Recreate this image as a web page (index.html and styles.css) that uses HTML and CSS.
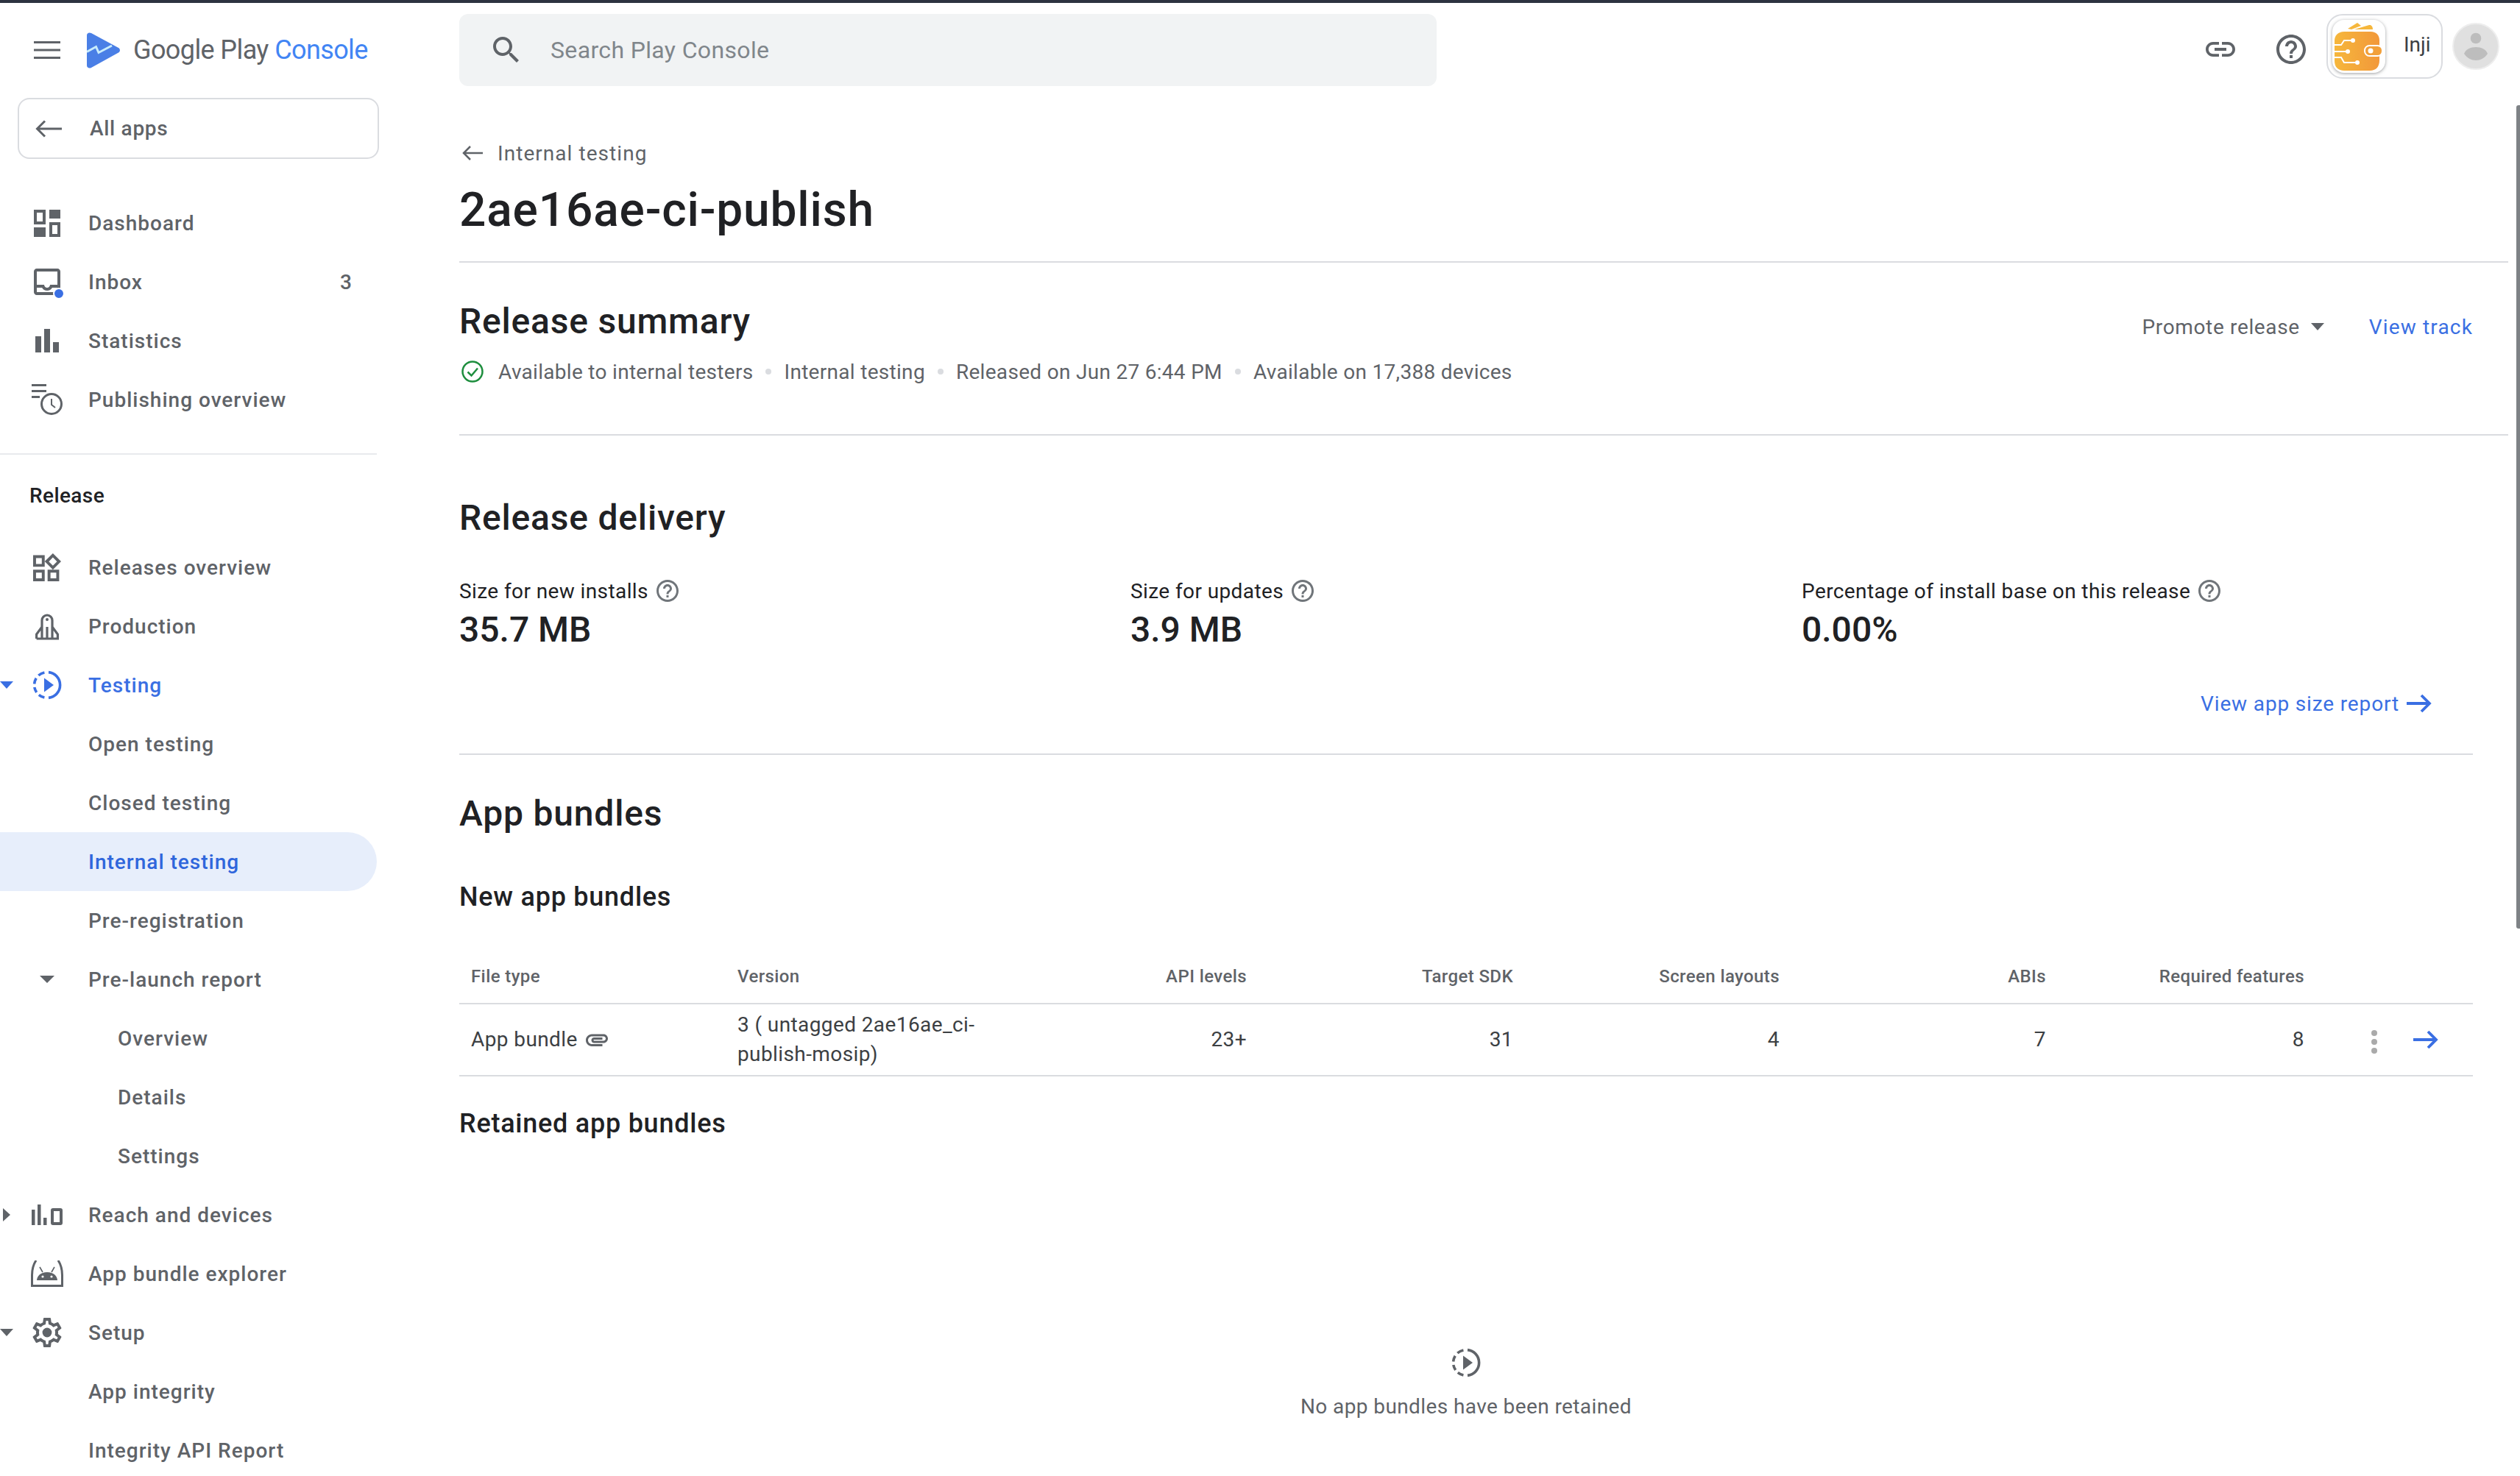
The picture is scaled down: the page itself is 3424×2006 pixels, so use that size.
FILE: index.html
```html
<!DOCTYPE html>
<html lang="en">
  <head>
    <meta charset="UTF-8" />
    <title>2ae16ae-ci-publish</title>
    <link rel="stylesheet" href="styles.css">
  </head>
  <body>
    <svg class="sprite">
      <symbol id="i-testing" viewBox="0 0 40 40">
        <g fill="none" stroke="currentColor" stroke-width="3.6">
          <path d="M22 2.6A17.5 17.5 0 0 1 22 37.4" />
          <path d="M16.4 2.9A17.5 17.5 0 0 0 8.3 7" />
          <path d="M5.2 10.7A17.5 17.5 0 0 0 2.6 18.5" />
          <path d="M2.8 23A17.5 17.5 0 0 0 5.7 30" />
          <path d="M8.8 33.4A17.5 17.5 0 0 0 16.4 37.1" />
        </g>
        <path fill="currentColor" d="M16 10.500L29 20 16 29.500z" />
      </symbol>
      <symbol id="i-help" viewBox="0 0 24 24">
        <path fill="currentColor" d="M11 18h2v-2h-2v2zm1-16C6.48 2 2 6.48 2 12s4.48 10 10 10 10-4.48 10-10S17.52 2 12 2zm0 18c-4.41 0-8-3.59-8-8s3.59-8 8-8 8 3.59 8 8-3.59 8-8 8zm0-14c-2.21 0-4 1.790-4 4h2c0-1.100.9-2 2-2s2 .9 2 2c0 2-3 1.750-3 5h2c0-2.250 3-2.500 3-5 0-2.210-1.790-4-4-4z" />
      </symbol>
      <symbol id="i-arrow-right" viewBox="0 0 36 36">
        <path fill="none" stroke="currentColor" stroke-width="3.8" d="M2 18H32M22 7l11 11-11 11" />
      </symbol>
    </svg>

    <div class="app">
      <aside class="sidebar">
        <div class="brand">
          <svg class="menu-icon" viewBox="0 0 36 24"><path fill="currentColor" d="M0 0h36v3H0zM0 10.500h36v3H0zM0 21h36v3H0z" /></svg>
          <svg class="brand-logo" viewBox="0 0 45 49">
            <path fill="#4a7fe6" d="M0 4C0 1 3-.5 6 1L43 21c2.600 1.400 2.600 5 0 6.500L6 48c-3 1.500-6 0-6-3z" />
            <path fill="none" stroke="#c8ecfb" stroke-width="3" d="M0 26.500L12.500 19.500 16 27.500 34 18" />
          </svg>
          <span class="brand-name">Google Play <span class="brand-accent">Console</span></span>
        </div>

        <a class="all-apps">
          <svg viewBox="0 0 36 24"><path fill="none" stroke="currentColor" stroke-width="3" d="M36 12H3M13 1.500L2.500 12 13 22.500" /></svg>
          <span>All apps</span>
        </a>

        <nav class="nav nav-top">
          <a class="nav-row">
            <span class="caret-slot"></span>
            <span class="icon-slot">
              <svg width="36" height="37" viewBox="0 0 36 37"><path fill="currentColor" fill-rule="evenodd" d="M0 0h16v20H0zM4 4v12h8V4zM21 0h15v12H21zM0 24h16v13H0zM21 17h15v20H21zM25 21v12h7V21z" /></svg>
            </span>
            <span class="nav-text">Dashboard</span>
          </a>
          <a class="nav-row">
            <span class="caret-slot"></span>
            <span class="icon-slot">
              <svg width="36" height="36" viewBox="3 3 18 18"><path fill="currentColor" d="M19 3H5c-1.100 0-2 .9-2 2v14c0 1.100.9 2 2 2h14c1.100 0 2-.9 2-2V5c0-1.100-.9-2-2-2zm0 16H5v-3h3.560c.69 1.190 1.970 2 3.450 2s2.750-.81 3.450-2H19v3zm0-5h-4.990c0 1.100-.9 2-2 2s-2-.9-2-2H5V5h14v9z" /></svg>
              <span class="unread-dot"></span>
            </span>
            <span class="nav-text">Inbox</span>
            <span class="nav-count">3</span>
          </a>
          <a class="nav-row">
            <span class="caret-slot"></span>
            <span class="icon-slot">
              <svg width="32" height="32" viewBox="0 0 32 32"><path fill="currentColor" d="M0 10h8v22H0zM12 0h8v32h-8zM24 18h8v14h-8z" /></svg>
            </span>
            <span class="nav-text">Statistics</span>
          </a>
          <a class="nav-row">
            <span class="caret-slot"></span>
            <span class="icon-slot">
              <svg width="42" height="42" viewBox="0 0 42 42">
                <path fill="currentColor" d="M0 0h20v3H0zM0 8h20v3H0zM0 16h11v3H0z" />
                <circle cx="27" cy="27" r="13.500" fill="none" stroke="currentColor" stroke-width="3" />
                <path fill="none" stroke="currentColor" stroke-width="2" d="M27 20v8l5 4" />
              </svg>
            </span>
            <span class="nav-text">Publishing overview</span>
          </a>
        </nav>

        <div class="nav-divider"></div>
        <div class="nav-label">Release</div>

        <nav class="nav">
          <a class="nav-row">
            <span class="caret-slot"></span>
            <span class="icon-slot">
              <svg width="38" height="38" viewBox="3 1.690 19.320 19.320"><path fill="currentColor" d="M16.660 4.520l2.830 2.830-2.830 2.830-2.830-2.830 2.830-2.830M9 5v4H5V5h4m10 10v4h-4v-4h4M9 15v4H5v-4h4m7.660-13.310L11 7.340 16.660 13l5.660-5.660-5.660-5.650zM11 3H3v8h8V3zm10 10h-8v8h8v-8zm-10 0H3v8h8v-8z" /></svg>
            </span>
            <span class="nav-text">Releases overview</span>
          </a>
          <a class="nav-row">
            <span class="caret-slot"></span>
            <span class="icon-slot">
              <svg width="36" height="38" viewBox="0 0 36 38">
                <path fill="none" stroke="currentColor" stroke-width="3.200" d="M11 36V11a7 7 0 0 1 14 0v25M3.600 36H32.400V30L25 20M3.600 36V30L11 20M18 20v15" />
                <circle cx="18" cy="10" r="2" fill="currentColor" />
              </svg>
            </span>
            <span class="nav-text">Production</span>
          </a>
          <a class="nav-row is-open">
            <span class="caret-slot"><span class="caret"></span></span>
            <span class="icon-slot"><svg width="40" height="40"><use href="#i-testing" /></svg></span>
            <span class="nav-text">Testing</span>
          </a>
          <a class="nav-row">
            <span class="caret-slot"></span>
            <span class="icon-slot"></span>
            <span class="nav-text">Open testing</span>
          </a>
          <a class="nav-row">
            <span class="caret-slot"></span>
            <span class="icon-slot"></span>
            <span class="nav-text">Closed testing</span>
          </a>
          <a class="nav-row is-active">
            <span class="caret-slot"></span>
            <span class="icon-slot"></span>
            <span class="nav-text">Internal testing</span>
          </a>
          <a class="nav-row">
            <span class="caret-slot"></span>
            <span class="icon-slot"></span>
            <span class="nav-text">Pre-registration</span>
          </a>
          <a class="nav-row">
            <span class="caret-slot"></span>
            <span class="icon-slot"><span class="caret caret-wide"></span></span>
            <span class="nav-text">Pre-launch report</span>
          </a>
          <a class="nav-row nav-sub">
            <span class="caret-slot"></span>
            <span class="icon-slot"></span>
            <span class="nav-text">Overview</span>
          </a>
          <a class="nav-row nav-sub">
            <span class="caret-slot"></span>
            <span class="icon-slot"></span>
            <span class="nav-text">Details</span>
          </a>
          <a class="nav-row nav-sub">
            <span class="caret-slot"></span>
            <span class="icon-slot"></span>
            <span class="nav-text">Settings</span>
          </a>
          <a class="nav-row">
            <span class="caret-slot"><span class="caret caret-right"></span></span>
            <span class="icon-slot">
              <svg width="42" height="28" viewBox="0 0 42 28">
                <path fill="currentColor" d="M0 7h4.500v21H0zM8 0h4.500v28H8zM16 18h4.500v10H16z" />
                <rect x="28" y="7" width="12" height="19" rx="1" fill="none" stroke="currentColor" stroke-width="4" />
              </svg>
            </span>
            <span class="nav-text">Reach and devices</span>
          </a>
          <a class="nav-row">
            <span class="caret-slot"></span>
            <span class="icon-slot">
              <svg width="44" height="36" viewBox="0 0 44 36">
                <path fill="none" stroke="currentColor" stroke-width="3" d="M7 0C3 6 1.500 12 1.500 20v14.500h41V20C42.500 12 41 6 37 0" />
                <path fill="currentColor" d="M8 27c.5-6 5-11 14-11s13.500 5 14 11z" />
                <path fill="none" stroke="currentColor" stroke-width="1.600" d="M12 9l4 7M32 9l-4 7" />
                <circle cx="16" cy="22" r="1.600" fill="#fff" />
                <circle cx="28" cy="22" r="1.600" fill="#fff" />
              </svg>
            </span>
            <span class="nav-text">App bundle explorer</span>
          </a>
          <a class="nav-row">
            <span class="caret-slot"><span class="caret"></span></span>
            <span class="icon-slot">
              <svg width="40" height="40" viewBox="2 2 20 20">
                <path fill="currentColor" d="M19.430 12.980c.04-.32.07-.64.07-.98 0-.34-.03-.66-.07-.98l2.110-1.650c.19-.15.24-.42.12-.64l-2-3.460c-.09-.16-.26-.25-.44-.25-.06 0-.12.01-.17.03l-2.490 1c-.52-.4-1.080-.73-1.690-.98l-.38-2.650C14.460 2.180 14.250 2 14 2h-4c-.25 0-.46.18-.49.42l-.38 2.650c-.61.25-1.170.59-1.690.98l-2.490-1c-.06-.02-.12-.03-.18-.03-.17 0-.34.09-.43.25l-2 3.460c-.13.22-.07.49.12.64l2.110 1.650c-.04.32-.07.65-.07.98 0 .33.03.66.07.98l-2.110 1.650c-.19.15-.24.42-.12.64l2 3.460c.09.16.26.25.44.25.06 0 .12-.01.17-.03l2.490-1c.52.4 1.080.73 1.690.98l.38 2.650c.03.24.24.42.49.42h4c.25 0 .46-.18.49-.42l.38-2.650c.61-.25 1.170-.59 1.690-.98l2.490 1c.06.02.12.03.18.03.17 0 .34-.09.43-.25l2-3.460c.12-.22.07-.49-.12-.64l-2.110-1.650zm-1.980-1.710c.04.31.05.52.05.73 0 .21-.02.43-.05.73l-.14 1.130.89.7 1.080.84-.7 1.210-1.270-.51-1.040-.42-.9.68c-.43.32-.84.56-1.250.73l-1.060.43-.16 1.130-.2 1.350h-1.400l-.19-1.350-.16-1.130-1.060-.43c-.43-.18-.83-.41-1.230-.71l-.91-.7-1.060.43-1.270.51-.7-1.210 1.080-.84.89-.7-.14-1.130c-.03-.31-.05-.54-.05-.74s.02-.43.05-.73l.14-1.130-.89-.7-1.080-.84.7-1.210 1.270.51 1.040.42.9-.68c.43-.32.84-.56 1.250-.73l1.060-.43.16-1.130.2-1.350h1.390l.19 1.350.16 1.130 1.060.43c.43.18.83.41 1.230.71l.91.7 1.060-.43 1.270-.51.7 1.210-1.070.85-.89.7.14 1.130z" />
                <circle cx="12" cy="12" r="3.200" fill="currentColor" />
              </svg>
            </span>
            <span class="nav-text">Setup</span>
          </a>
          <a class="nav-row">
            <span class="caret-slot"></span>
            <span class="icon-slot"></span>
            <span class="nav-text">App integrity</span>
          </a>
          <a class="nav-row">
            <span class="caret-slot"></span>
            <span class="icon-slot"></span>
            <span class="nav-text">Integrity API Report</span>
          </a>
        </nav>
      </aside>

      <div class="main">
        <header class="topbar">
          <div class="search">
            <svg viewBox="0 0 24 24"><path fill="currentColor" d="M15.500 14h-.79l-.28-.27C15.410 12.590 16 11.110 16 9.500 16 5.910 13.090 3 9.500 3S3 5.910 3 9.500 5.910 16 9.500 16c1.610 0 3.090-.59 4.230-1.570l.27.28v.79l5 4.990L20.490 19l-4.990-5zm-6 0C7.010 14 5 11.990 5 9.500S7.010 5 9.500 5 14 7.010 14 9.500 11.990 14 9.500 14z" /></svg>
            <span>Search Play Console</span>
          </div>
          <div class="top-actions">
            <svg class="top-icon" viewBox="0 0 24 24"><path fill="currentColor" d="M3.900 12c0-1.710 1.390-3.100 3.100-3.100h4V7H7c-2.760 0-5 2.240-5 5s2.240 5 5 5h4v-1.900H7c-1.710 0-3.100-1.390-3.100-3.100zM8 13h8v-2H8v2zm9-6h-4v1.900h4c1.710 0 3.100 1.390 3.100 3.100s-1.390 3.100-3.100 3.100h-4V17h4c2.760 0 5-2.240 5-5s-2.240-5-5-5z" /></svg>
            <svg class="top-icon"><use href="#i-help" /></svg>
            <div class="app-chip">
              <span class="app-icon">
                <svg width="72" height="72" viewBox="0 0 72 72">
                  <defs>
                    <linearGradient id="wallet" x1="0" y1="0" x2="1" y2="0">
                      <stop offset="0" stop-color="#f6b73c" />
                      <stop offset="1" stop-color="#f2983a" />
                    </linearGradient>
                  </defs>
                  <path fill="#f6b73c" d="M21 12L34 4l5 4-13 5zM30 13l20-6c3-.5 5 2 5 6z" />
                  <path fill="url(#wallet)" d="M16 16h36c8 0 12 5 12 12v27c0 9-5 14-13 14H16C8 69 3 64 3 56V28C3 21 8 16 16 16z" />
                  <g fill="none" stroke="#fff" stroke-width="2">
                    <path d="M3 34h9l4-6h12M3 43h18M3 51h9l4 7h18" />
                    <rect x="44" y="35" width="24" height="14" rx="6.500" fill="#f2a03a" />
                  </g>
                  <g fill="#fff">
                    <circle cx="28" cy="28" r="3" />
                    <circle cx="21" cy="43" r="3" />
                    <circle cx="34" cy="58" r="3" />
                    <circle cx="52" cy="42" r="3.500" />
                  </g>
                </svg>
              </span>
              <span class="app-name">Inji</span>
            </div>
            <svg class="avatar" viewBox="0 0 64 64">
              <circle cx="32" cy="32" r="31" fill="#e0e0e0" stroke="#eeeeee" stroke-width="2" />
              <circle cx="32" cy="21" r="7.300" fill="#bdbdbd" />
              <path fill="#bdbdbd" d="M16 42c2-6 9-9 16-9s14 3 16 9c-4 6-10 9-16 9s-12-3-16-9z" />
            </svg>
          </div>
        </header>

        <div class="page-head">
          <a class="back-link">
            <svg viewBox="0 0 28 24"><path fill="none" stroke="currentColor" stroke-width="2.500" d="M28 12H2M11 3l-9 9 9 9" /></svg>
            <span>Internal testing</span>
          </a>
          <h1 class="page-title">2ae16ae-ci-publish</h1>
        </div>

        <section class="summary">
          <div>
            <h2 class="section-title">Release summary</h2>
            <div class="status-row">
              <svg class="status-icon" viewBox="0 0 30 30">
                <circle cx="15" cy="15" r="13.500" fill="none" stroke="#1e8e3e" stroke-width="2.500" />
                <path fill="none" stroke="#1e8e3e" stroke-width="2.500" d="M8.500 15.500l5 5 8.500-10" />
              </svg>
              <span>Available to internal testers</span>
              <span class="dot"></span>
              <span>Internal testing</span>
              <span class="dot"></span>
              <span>Released on Jun 27 6:44 PM</span>
              <span class="dot"></span>
              <span>Available on 17,388 devices</span>
            </div>
          </div>
          <div class="summary-actions">
            <a class="promote">Promote release<span class="caret"></span></a>
            <a class="link">View track</a>
          </div>
        </section>

        <section class="delivery">
          <h2 class="section-title">Release delivery</h2>
          <div class="stats">
            <div>
              <div class="stat-label">Size for new installs <svg><use href="#i-help" /></svg></div>
              <div class="stat-value">35.7 MB</div>
            </div>
            <div>
              <div class="stat-label">Size for updates <svg><use href="#i-help" /></svg></div>
              <div class="stat-value">3.9 MB</div>
            </div>
            <div>
              <div class="stat-label">Percentage of install base on this release <svg><use href="#i-help" /></svg></div>
              <div class="stat-value">0.00%</div>
            </div>
          </div>
          <a class="link size-report">View app size report <svg><use href="#i-arrow-right" /></svg></a>
        </section>

        <section class="bundles">
          <h2 class="section-title">App bundles</h2>
          <h3 class="sub-title">New app bundles</h3>
          <table class="bundle-table">
            <colgroup>
              <col class="col-type" />
              <col class="col-version" />
              <col class="col-api" />
              <col class="col-num" />
              <col class="col-num" />
              <col class="col-num" />
              <col class="col-features" />
              <col />
            </colgroup>
            <thead>
              <tr>
                <th>File type</th>
                <th>Version</th>
                <th class="num">API levels</th>
                <th class="num">Target SDK</th>
                <th class="num">Screen layouts</th>
                <th class="num">ABIs</th>
                <th class="num">Required features</th>
                <th></th>
              </tr>
            </thead>
            <tbody>
              <tr>
                <td>
                  <span class="file-type">App bundle
                    <svg viewBox="0 0 24 24"><path fill="currentColor" d="M2 12.500C2 9.460 4.460 7 7.500 7H18c2.210 0 4 1.790 4 4s-1.790 4-4 4H9.500C8.120 15 7 13.880 7 12.500S8.120 10 9.500 10H17v2H9.410c-.55 0-.55 1 0 1H18c1.100 0 2-.9 2-2s-.9-2-2-2H7.500C5.570 9 4 10.570 4 12.500S5.570 16 7.500 16H17v2H7.500C4.460 18 2 15.540 2 12.500z" /></svg>
                  </span>
                </td>
                <td>3 ( untagged 2ae16ae_ci-publish-mosip)</td>
                <td class="num">23+</td>
                <td class="num">31</td>
                <td class="num">4</td>
                <td class="num">7</td>
                <td class="num">8</td>
                <td>
                  <div class="row-actions">
                    <svg class="kebab" viewBox="0 0 8 32"><circle cx="4" cy="4" r="4" /><circle cx="4" cy="16" r="4" /><circle cx="4" cy="28" r="4" /></svg>
                    <svg class="row-arrow"><use href="#i-arrow-right" /></svg>
                  </div>
                </td>
              </tr>
            </tbody>
          </table>
          <h3 class="sub-title retained">Retained app bundles</h3>
          <div class="empty">
            <svg width="40" height="40"><use href="#i-testing" /></svg>
            <p>No app bundles have been retained</p>
          </div>
        </section>
      </div>
    </div>

    <div class="scrollbar"></div>
  </body>
</html>
```

FILE: styles.css
```css
* {
  box-sizing: border-box;
}
html,
body {
  height: 100%;
}
body {
  margin: 0;
  height: 2006px;
  overflow: hidden;
  border-top: 4px solid #2d3340;
  background: #fff;
  color: #202124;
  font-family: Roboto, "Liberation Sans", sans-serif;
  font-size: 28px;
}
.sprite {
  display: none;
}
.app {
  display: flex;
  height: 2002px;
}
a {
  color: inherit;
  text-decoration: none;
}
h1,
h2,
h3,
p {
  margin: 0;
}

/* sidebar */
.sidebar {
  flex: none;
  width: 512px;
  color: #5f6368;
}
.brand {
  display: flex;
  align-items: center;
  height: 128px;
  padding-left: 46px;
}
.menu-icon {
  flex: none;
  width: 36px;
  height: 24px;
}
.brand-logo {
  flex: none;
  width: 45px;
  height: 49px;
  margin-left: 36px;
}
.brand-name {
  flex: none;
  margin-left: 18px;
  font-size: 36px;
  letter-spacing: -0.6px;
  white-space: nowrap;
}
.brand-accent {
  color: #4285f4;
}
.all-apps {
  display: flex;
  align-items: center;
  width: 491px;
  height: 83px;
  margin: 1px 0 0 24px;
  padding-left: 22px;
  border: 2px solid #dadce0;
  border-radius: 16px;
  font-weight: 500;
  letter-spacing: 0.7px;
}
.all-apps svg {
  width: 36px;
  height: 24px;
  margin-right: 38px;
}
.nav-top {
  margin-top: 47px;
}
.nav-row {
  display: flex;
  align-items: center;
  height: 80px;
  font-weight: 500;
  letter-spacing: 1px;
}
.caret-slot {
  flex: none;
  display: flex;
  align-items: center;
  width: 44px;
}
.icon-slot {
  flex: none;
  position: relative;
  display: flex;
  align-items: center;
  justify-content: center;
  width: 40px;
  margin-right: 36px;
  overflow: visible;
}
.icon-slot svg {
  flex: none;
  margin: 0 -4px;
}
.nav-sub .nav-text {
  margin-left: 40px;
}
.nav-count {
  margin-left: auto;
  margin-right: 33px;
}
.nav-row.is-open {
  color: #3a6fe3;
}
.nav-row.is-active {
  width: 512px;
  border-radius: 0 40px 40px 0;
  background: #e7eefb;
  color: #2f66dc;
}
.unread-dot {
  position: absolute;
  right: -4px;
  bottom: -6px;
  width: 16px;
  height: 16px;
  border: 2px solid #fff;
  border-radius: 50%;
  background: #3a6fe3;
}
.caret {
  display: block;
  width: 0;
  height: 0;
  border-top: 10px solid currentColor;
  border-left: 9px solid transparent;
  border-right: 9px solid transparent;
}
.caret-wide {
  border-left-width: 10px;
  border-right-width: 10px;
}
.caret-right {
  margin-left: 4px;
  border-top: 9px solid transparent;
  border-bottom: 9px solid transparent;
  border-left: 10px solid currentColor;
  border-right: 0;
}
.nav-divider {
  height: 2px;
  margin-top: 33px;
  background: #e8eaed;
}
.nav-label {
  display: flex;
  align-items: center;
  height: 80px;
  margin: 15px 0 18px;
  padding-left: 40px;
  color: #202124;
  font-weight: 500;
  letter-spacing: 0.4px;
}

/* main column */
.main {
  flex: 1;
  min-width: 0;
  padding: 0 16px 0 112px;
}
.topbar {
  display: flex;
  align-items: flex-start;
  justify-content: space-between;
  padding: 15px 12px 0 0;
}
.search {
  display: flex;
  align-items: center;
  width: 1328px;
  height: 98px;
  padding-left: 40px;
  border-radius: 12px;
  background: #f1f3f4;
  color: #80868b;
  font-size: 32px;
  letter-spacing: 0.35px;
}
.search svg {
  width: 48px;
  height: 48px;
  margin-right: 36px;
  color: #5f6368;
}
.top-actions {
  display: flex;
  align-items: center;
  height: 88px;
}
.top-icon {
  width: 48px;
  height: 48px;
  margin: 8px 48px 0 0;
  color: #5f6368;
}
.top-icon + .top-icon {
  margin-right: 24px;
}
.app-chip {
  display: flex;
  align-items: center;
  width: 158px;
  height: 88px;
  padding-left: 6px;
  border: 2px solid #dadce0;
  border-radius: 22px;
}
.app-icon {
  display: flex;
  width: 72px;
  height: 72px;
  border-radius: 16px;
  background: #fff;
  box-shadow: 0 1px 4px rgba(60, 64, 67, 0.5);
}
.app-name {
  margin: -6px 0 0 25px;
  color: #3c4043;
}
.avatar {
  width: 64px;
  height: 64px;
  margin-left: 13px;
}

.page-head {
  padding-top: 71px;
  border-bottom: 2px solid #dadce0;
}
.back-link {
  display: flex;
  align-items: center;
  height: 40px;
  color: #5f6368;
  letter-spacing: 1.05px;
}
.back-link svg {
  width: 28px;
  height: 24px;
  margin: 0 20px 0 4px;
}
.page-title {
  margin: 18px 0 29px;
  font-size: 64px;
  font-weight: 500;
  letter-spacing: 0.85px;
  line-height: 80px;
}
.section-title {
  font-size: 48px;
  font-weight: 500;
  letter-spacing: 0.8px;
  line-height: 64px;
}
.sub-title {
  font-size: 36px;
  font-weight: 500;
  letter-spacing: 0.75px;
  line-height: 48px;
}

.summary {
  display: flex;
  justify-content: space-between;
  height: 235px;
  padding: 48px 48px 0 0;
  border-bottom: 2px solid #dadce0;
}
.status-row {
  display: flex;
  align-items: center;
  gap: 17px;
  height: 40px;
  margin-top: 16px;
  color: #5f6368;
  letter-spacing: 0.3px;
}
.status-icon {
  width: 30px;
  height: 30px;
  margin: 0 3px;
}
.dot {
  width: 8px;
  height: 8px;
  border-radius: 50%;
  background: #dadce0;
}
.summary-actions {
  display: flex;
  align-items: center;
  gap: 61px;
  height: 40px;
  margin-top: 19px;
}
.promote {
  display: flex;
  align-items: center;
  gap: 15px;
  color: #5f6368;
  letter-spacing: 0.65px;
}
.link {
  color: #3a6fe3;
  letter-spacing: 1.15px;
}

.delivery {
  padding-top: 80px;
  width: 2736px;
  height: 434px;
  border-bottom: 2px solid #dadce0;
}
.stats {
  display: grid;
  grid-template-columns: repeat(3, 912px);
  margin-top: 47px;
}
.stat-label {
  display: flex;
  align-items: center;
  gap: 8px;
  height: 40px;
  letter-spacing: 0.4px;
}
.stat-label svg {
  width: 36px;
  height: 36px;
  color: #70757a;
}
.stat-value {
  margin-top: 3px;
  font-size: 48px;
  font-weight: 500;
  line-height: 60px;
}
.size-report {
  display: flex;
  align-items: center;
  justify-content: flex-end;
  gap: 8px;
  height: 40px;
  margin: 50px 56px 0 0;
  letter-spacing: 0.85px;
}
.size-report svg {
  width: 36px;
  height: 36px;
}

.bundles {
  width: 2736px;
  padding-top: 48px;
}
.bundles .sub-title {
  margin-top: 57px;
}
.bundle-table {
  width: 100%;
  margin-top: 48px;
  border-collapse: collapse;
  table-layout: fixed;
  color: #3c4043;
}
.col-type {
  width: 378px;
}
.col-version {
  width: 362px;
}
.col-api {
  width: 330px;
}
.col-num {
  width: 362px;
}
.col-features {
  width: 351px;
}
.bundle-table th {
  height: 73px;
  padding: 0;
  border-bottom: 2px solid #dadce0;
  color: #5f6368;
  font-size: 24px;
  font-weight: 500;
  letter-spacing: 0.4px;
  text-align: left;
}
.bundle-table td {
  height: 98px;
  padding: 0;
  border-bottom: 2px solid #dadce0;
  line-height: 40px;
  letter-spacing: 0.4px;
}
.bundle-table th:first-child,
.bundle-table td:first-child {
  padding-left: 16px;
}
.bundle-table .num {
  text-align: right;
}
.file-type {
  display: flex;
  align-items: center;
  gap: 8px;
}
.file-type svg {
  width: 36px;
  height: 36px;
  color: #5f6368;
}
.row-actions {
  display: flex;
  align-items: center;
  justify-content: flex-end;
  padding-right: 47px;
}
.kebab {
  width: 8px;
  height: 32px;
  margin: 6px 47px 0 0;
  fill: #aaaaaa;
}
.row-arrow {
  width: 36px;
  height: 36px;
  color: #3a6fe3;
}
.bundles .retained {
  margin-top: 40px;
}
.empty {
  display: flex;
  flex-direction: column;
  align-items: center;
  margin-top: 281px;
  color: #5f6368;
  letter-spacing: 0.4px;
}
.empty p {
  margin-top: 20px;
  line-height: 40px;
}
.scrollbar {
  position: absolute;
  top: 143px;
  right: 0;
  width: 5px;
  height: 1119px;
  border-radius: 3px 0 0 3px;
  background: #7e8286;
}
```
